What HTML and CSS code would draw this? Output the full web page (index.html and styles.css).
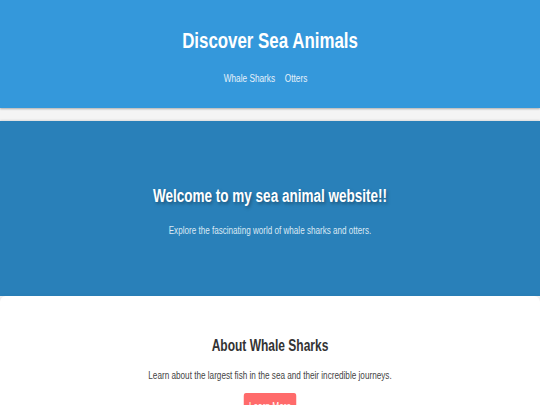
FILE: index.html
```html
<!DOCTYPE html>
<html lang="en">

<head>
  <meta charset="UTF-8" />
  <meta name="viewport" content="width=device-width, initial-scale=1.0" />
  <title>Discover Sea Animals</title>
  <link rel="stylesheet" href="styles.css">
</head>

<body>
  <header class="header">
    <div class="inner">
      <h1>Discover Sea Animals</h1>
      <nav class="nav">
        <a href="#whale-sharks" class="nav-link">Whale Sharks</a>
        <a href="#otters" class="nav-link">Otters</a>
      </nav>
    </div>
  </header>

  <!-- 顶部欢迎区 -->
  <section class="hero">
    <div class="inner">
      <h2>Welcome to my sea animal website!!</h2>
      <p>Explore the fascinating world of whale sharks and otters.</p>
    </div>
  </section>

  <section class="card" id="whale-sharks">
    <div class="inner">
      <h3>About Whale Sharks</h3>
      <p>Learn about the largest fish in the sea and their incredible journeys.</p>
      <a href="#" class="btn">Learn More</a>
    </div>
  </section>
</body>

</html>
```

FILE: styles.css
```css
body {
  font-family: 'Liberation Sans', Arial, sans-serif;
  margin: 0;
  padding: 0;
  background-color: #f4f4f4;
  color: #444;
}

/* 文字整体横向收窄 */
.inner {
  transform: scaleX(0.75);
  text-align: center;
}

.header {
  background: #3498db;
  color: white;
  padding: 27px 0 23px;
  margin-bottom: 13px;
  box-shadow: 0 1px 2px rgba(0,0,0,0.3);
}

.header h1 {
  margin: 0 0 18px;
  font-size: 22.5px;
  line-height: 1.2;
  font-weight: bold;
}

.nav {
  display: flex;
  justify-content: center;
  gap: 13px;
  padding-right: 12px;
  font-size: 11px;
  line-height: 1.2;
}

.nav-link {
  color: #e6f1fa;
  text-decoration: none;
}

.hero {
  background: #2980b9;
  color: white;
  padding: 65px 20px 59px;
  box-shadow: 0 -1px 2px rgba(0,0,0,0.1);
}

.hero h2 {
  margin: 0 0 16px;
  font-size: 18px;
  line-height: 1.2;
  text-shadow: 2px 2px 4px rgba(0,0,0,0.35);
}

.hero p {
  margin: 0;
  font-size: 10.8px;
  line-height: 1.2;
  color: #dbe9f4;
}

.card {
  background: white;
  border-radius: 6px;
  padding: 40px 20px 30px;
  box-shadow: 0 2px 6px rgba(0,0,0,0.08);
}

.card h3 {
  margin: 0 0 14px;
  font-size: 16px;
  line-height: 1.2;
  color: #333;
}

.card p {
  margin: 0 0 11px;
  font-size: 10.9px;
  line-height: 1.2;
}

.btn {
  display: inline-block;
  background: #ff6b6b;
  color: white;
  text-decoration: none;
  font-size: 11px;
  line-height: 1.2;
  padding: 7px 7px;
  border-radius: 3px;
}
```
